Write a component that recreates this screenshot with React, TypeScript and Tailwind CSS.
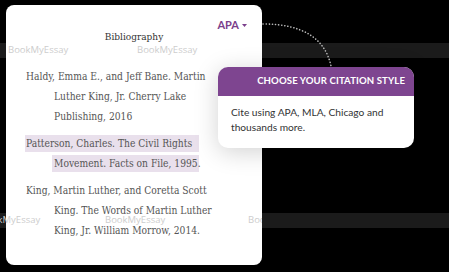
import React from "react";

const serif = { fontFamily: '"DejaVu Serif Condensed", "DejaVu Serif", serif' };

function Line({ indent, children }: { indent?: boolean; children: React.ReactNode }) {
  return (
    <div className={`h-[20px] leading-[20px] whitespace-nowrap ${indent ? "pl-[48px]" : "pl-[20px]"}`}>
      {children}
    </div>
  );
}

function Watermark({ className }: { className: string }) {
  return (
    <span
      className={`absolute text-[9.5px] leading-[12px] text-[#cdcdcd] whitespace-nowrap ${className}`}
      style={{ fontFamily: '"Open Sans", sans-serif' }}
    >
      BookMyEssay
    </span>
  );
}

export default function App() {
  return (
    <div className="relative w-[449px] h-[272px] bg-black overflow-hidden">
      {/* watermark bands */}
      <div className="absolute left-0 top-[43px] w-full h-[15px] bg-[#1b1b1b]" />
      <div className="absolute left-0 top-[213px] w-full h-[15px] bg-[#1b1b1b]" />
      <div className="absolute left-0 top-[214px] w-[6px] h-[12px] overflow-hidden">
        <Watermark className="left-[-20px] top-0" />
      </div>

      {/* card */}
      <div className="relative ml-[6px] mt-[5px] w-[256px] h-[260px] bg-white rounded-[8px] overflow-hidden flex flex-col">
        <div
          className="absolute right-[15px] top-[13px] flex items-center gap-[3px] text-[#7b3f8c] font-bold text-[11px] leading-[14px]"
          style={{ fontFamily: 'Lato, sans-serif' }}
        >
          APA
          <svg width="5" height="3" viewBox="0 0 5 3"><path d="M0 0 L5 0 L2.5 3 Z" fill="#7b3f8c" /></svg>
        </div>
        <div className="pt-[25px] text-center text-[10px] leading-[14px] text-[#333]" style={serif}>
          Bibliography
        </div>
        <div className="pt-[23px] flex flex-col text-[10.2px] text-[#555]" style={serif}>
          <div className="flex flex-col">
            <Line>Haldy, Emma E., and Jeff Bane. Martin</Line>
            <Line indent>Luther King, Jr. Cherry Lake</Line>
            <Line indent>Publishing, 2016</Line>
          </div>
          <div className="flex flex-col pt-[6px]">
            <div className="h-[20px] flex items-center whitespace-nowrap pl-[19px]">
              <span className="w-[174px] h-[17px] leading-[17px] bg-[#e9e0ec] pl-[1px]">
                Patterson, Charles. The Civil Rights
              </span>
            </div>
            <div className="h-[20px] flex items-center whitespace-nowrap pl-[46px]">
              <span className="w-[147px] h-[17px] leading-[17px] bg-[#e9e0ec] pl-[2px]">
                Movement. Facts on File, 1995.
              </span>
            </div>
          </div>
          <div className="flex flex-col pt-[8px]">
            <Line>King, Martin Luther, and Coretta Scott</Line>
            <Line indent>King. The Words of Martin Luther</Line>
            <Line indent>King, Jr. William Morrow, 2014.</Line>
          </div>
        </div>
        <Watermark className="left-[2px] top-[39px]" />
        <Watermark className="left-[131px] top-[39px]" />
        <Watermark className="left-[-26px] top-[209px]" />
        <Watermark className="left-[99px] top-[209px]" />
        <Watermark className="left-[242px] top-[209px]" />
      </div>

      {/* dotted connector */}
      <svg className="absolute left-0 top-0" width="449" height="272">
        <path
          d="M263 24 Q322 24 331 66"
          fill="none"
          stroke="#bdbdbd"
          strokeWidth="1.6"
          strokeDasharray="0.1 3"
          strokeLinecap="round"
        />
      </svg>

      {/* tooltip */}
      <div
        className="absolute left-[218px] top-[67px] w-[196px] rounded-[10px] bg-white overflow-hidden shadow-[0_4px_24px_rgba(0,0,0,0.18)] flex flex-col"
        style={{ fontFamily: 'Lato, sans-serif' }}
      >
        <div className="h-[29px] bg-[#7e4590] flex items-center justify-end pr-[9px] text-white font-bold text-[9.6px] tracking-[0.1px]">
          CHOOSE YOUR CITATION STYLE
        </div>
        <div className="px-[13px] pt-[9px] pb-[13px] text-[10.2px] leading-[15px] text-[#333]">
          Cite using APA, MLA, Chicago and
          <br />
          thousands more.
        </div>
      </div>
    </div>
  );
}
